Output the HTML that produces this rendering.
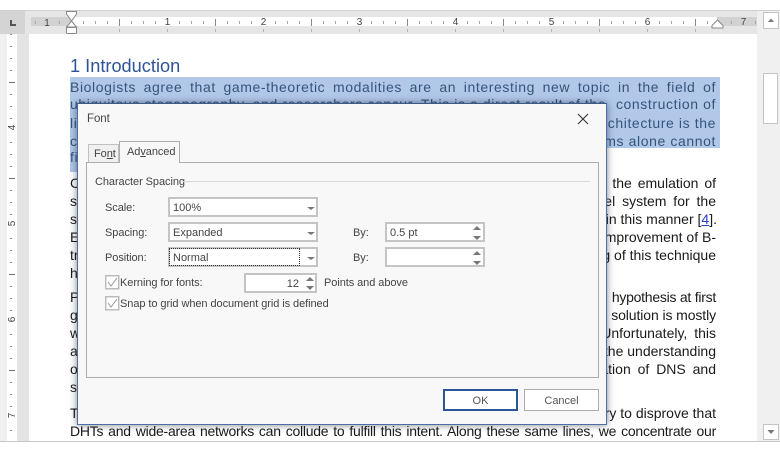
<!DOCTYPE html>
<html><head><meta charset="utf-8">
<style>
html,body{margin:0;padding:0;background:#fff;}
body{width:780px;height:452px;overflow:hidden;position:relative;font-family:"Liberation Sans",sans-serif;}
.a{position:absolute;}
.l{position:absolute;white-space:nowrap;font-size:14px;line-height:18px;height:18px;color:#1a1a1a;}
.j{left:70px;width:646px;text-align:justify;text-align-last:justify;white-space:normal;overflow:hidden;}
.r{right:64px;}
.s{color:#35547a;letter-spacing:.6px;}
.t{position:absolute;font-size:11px;line-height:14px;color:#444;white-space:nowrap;letter-spacing:-.07px;}
.box{position:absolute;box-sizing:border-box;border:2px solid #c4c4c4;background:#fff;font-size:11px;line-height:18px;color:#444;padding-left:3px;}
u{text-decoration:underline;}
</style></head><body>
<!-- window -->
<div class="a" style="left:0;top:10px;width:780px;height:432px;background:#f0f0f0;border-top:1px solid #d0d0d0;border-bottom:1px solid #c8c8c8;box-sizing:border-box;"></div>
<div class="a" style="left:25px;top:11px;width:732px;height:23px;background:#e6e6e6;"></div>
<div class="a" style="left:0;top:11px;width:25px;height:23px;background:#d4d4d4;"></div>
<div class="a" style="left:10px;top:20px;width:6px;height:6px;border-left:2px solid #555;border-bottom:2px solid #555;box-sizing:border-box;"></div>
<!-- vertical ruler -->
<div class="a" style="left:17px;top:34px;width:12px;height:407px;background:#e4e4e4;"></div>
<div class="a" style="left:7px;top:34px;width:10px;height:407px;background:#fff;"></div>
<!-- doc -->
<div class="a" style="left:29px;top:34px;width:728px;height:407px;background:#fff;"></div>
<!-- h ruler -->
<svg class="a" style="left:0;top:0;" width="780" height="452" xmlns="http://www.w3.org/2000/svg">
<defs>
<pattern id="ht" x="71" y="0" width="12" height="452" patternUnits="userSpaceOnUse"><rect x="12" y="21" width="1" height="3" fill="#a8a8a8"/><rect x="0" y="21" width="1" height="3" fill="#a8a8a8"/></pattern>
<pattern id="hl" x="71" y="0" width="48" height="452" patternUnits="userSpaceOnUse"><rect x="0" y="29" width="1" height="3" fill="#b4b4b4"/></pattern>
<pattern id="vt" x="0" y="10" width="12" height="12" patternUnits="userSpaceOnUse"><rect x="10" y="0" width="3" height="1" fill="#8a8a8a"/></pattern>
</defs>
<rect x="31" y="17" width="726" height="9" fill="#fff"/>
<rect x="31" y="17" width="40" height="9" fill="#d2d2d2"/>
<rect x="717" y="17" width="40" height="9" fill="#d2d2d2"/>
<rect x="31" y="17" width="726" height="9" fill="url(#ht)"/>
<rect x="71" y="27" width="646" height="7" fill="url(#hl)"/>
<g fill="#8a8a8a"><rect x="119" y="19" width="1" height="7"/><rect x="215" y="19" width="1" height="7"/><rect x="311" y="19" width="1" height="7"/><rect x="407" y="19" width="1" height="7"/><rect x="503" y="19" width="1" height="7"/><rect x="599" y="19" width="1" height="7"/><rect x="695" y="19" width="1" height="7"/></g>
<g fill="#fff"><rect x="164" y="17" width="7" height="9"/><rect x="260" y="17" width="7" height="9"/><rect x="356" y="17" width="7" height="9"/><rect x="452" y="17" width="7" height="9"/><rect x="548" y="17" width="7" height="9"/><rect x="644" y="17" width="7" height="9"/></g>
<rect x="44" y="17" width="7" height="9" fill="#d2d2d2"/><rect x="739" y="17" width="8" height="9" fill="#d2d2d2"/>
<g font-family="Liberation Sans" font-size="10" fill="#444" text-anchor="middle">
<text x="47" y="26">1</text><text x="167.500" y="25">1</text><text x="263.500" y="25">2</text><text x="359.500" y="25">3</text><text x="455.500" y="25">4</text><text x="551.500" y="25">5</text><text x="647.500" y="25">6</text><text x="743.500" y="25">7</text>
</g>
<!-- margin markers -->
<path d="M66.500 11.500H76.500V14L71.500 21L66.500 14Z" fill="#fff" stroke="#888"/>
<path d="M71.500 21L76.500 27H66.500Z" fill="#fff" stroke="#888"/>
<rect x="66.500" y="27.500" width="10" height="6" rx="1" fill="#fff" stroke="#888"/>
<path d="M717.500 20L723 25.500V28H712V25.500Z" fill="#fff" stroke="#888"/>
<!-- v ruler -->
<rect x="7" y="34" width="10" height="407" fill="url(#vt)"/>
<g fill="#777"><rect x="9" y="82" width="6" height="1"/><rect x="9" y="178" width="6" height="1"/><rect x="9" y="274" width="6" height="1"/><rect x="9" y="370" width="6" height="1"/></g>
<g fill="#fff"><rect x="7" y="122" width="10" height="11"/><rect x="7" y="218" width="10" height="11"/><rect x="7" y="314" width="10" height="11"/><rect x="7" y="410" width="10" height="11"/></g>
<g font-family="Liberation Sans" font-size="10" fill="#444" text-anchor="middle">
<text transform="translate(15,127.500) rotate(-90)">4</text><text transform="translate(15,223.500) rotate(-90)">5</text><text transform="translate(15,319.500) rotate(-90)">6</text><text transform="translate(15,415.500) rotate(-90)">7</text>
</g>
<!-- scrollbar -->
<rect x="757" y="34" width="23" height="407" fill="#f0f0f0"/>
<rect x="763.500" y="12.500" width="15" height="16" fill="#fff" stroke="#c4c4c4"/>
<path d="M768 22L771 18.500L774 22Z" fill="#777"/>
<rect x="763.500" y="73.500" width="14" height="50" fill="#fff" stroke="#c4c4c4"/>
<rect x="763.500" y="424.500" width="15" height="15" fill="#fff" stroke="#c4c4c4"/>
<path d="M767.500 430H774.500L771 434Z" fill="#777"/>
</svg>
<!-- selection -->
<div class="a" style="left:70px;top:77px;width:650px;height:71px;background:#b1c8e9;"></div>
<div class="a" style="left:70px;top:148px;width:9px;height:24px;background:#b1c8e9;"></div>
<div class="a" style="left:70px;top:54px;font-size:18.200px;line-height:24px;color:#2f5496;white-space:nowrap;">1 Introduction</div>

<div class="l j s" style="top:78px;">Biologists agree that game-theoretic modalities are an interesting new topic in the field of</div>
<div class="l s" style="top:95px;left:70px;">ubiquitous steganography, and researchers concur. This is a direct result of the</div>
<div class="l s r" style="top:95px;">construction of</div>
<div class="l s" style="top:114px;left:70px;">li</div><div class="l s r" style="top:114px;">rchitecture is the</div>
<div class="l s" style="top:132px;left:70px;">c</div><div class="l s r" style="top:132px;">ms alone cannot</div>
<div class="l s" style="top:148px;left:70px;">fi</div>

<div class="l" style="top:174px;left:70px;">C</div><div class="l r" style="top:174px;word-spacing:2px;">the emulation of</div>
<div class="l" style="top:192px;left:70px;">sy</div><div class="l r" style="top:192px;word-spacing:3px;">vel system for the</div>
<div class="l" style="top:210px;left:70px;">si</div><div class="l r" style="top:210px;right:63px;">in this manner [<span style="color:#2a3fc0;text-decoration:underline;">4</span>].</div>
<div class="l" style="top:228px;left:70px;">E</div><div class="l r" style="top:228px;">mprovement of B-</div>
<div class="l" style="top:246px;left:70px;">tr</div><div class="l r" style="top:246px;">g of this technique</div>
<div class="l" style="top:264px;left:70px;">h</div>
<div class="l" style="top:288px;left:70px;">P</div><div class="l r" style="top:288px;letter-spacing:-.25px;">hypothesis at first</div>
<div class="l" style="top:306px;left:70px;">g</div><div class="l r" style="top:306px;letter-spacing:-.1px;">solution is mostly</div>
<div class="l" style="top:324px;left:70px;">w</div><div class="l r" style="top:324px;word-spacing:3px;">Unfortunately, this</div>
<div class="l" style="top:342px;left:70px;">a</div><div class="l r" style="top:342px;">the understanding</div>
<div class="l" style="top:360px;left:70px;">o</div><div class="l r" style="top:360px;word-spacing:3px;">ation of DNS and</div>
<div class="l" style="top:378px;left:70px;">si</div>
<div class="l" style="top:404px;left:70px;">T</div><div class="l r" style="top:404px;">ry to disprove that</div>
<div class="l j" style="top:422px;letter-spacing:-.25px;">DHTs and wide-area networks can collude to fulfill this intent. Along these same lines, we concentrate our</div>

<!-- dialog -->
<div class="a" style="left:77px;top:103px;width:530px;height:322px;box-sizing:border-box;background:#f8f8f8;border:1.500px solid #4a6fa5;border-top-color:#3b5a86;box-shadow:0 0 7px rgba(20,30,50,.55);"></div>
<div class="t" style="left:87px;top:112px;font-size:11.500px;">Font</div>
<svg class="a" style="left:577px;top:113px;" width="12" height="12"><path d="M1 1L11 11M11 1L1 11" stroke="#333" stroke-width="1.100" fill="none"/></svg>
<!-- panel -->
<div class="a" style="left:86px;top:162px;width:513px;height:216px;box-sizing:border-box;border:1px solid #adadad;background:#f8f8f8;"></div>
<div class="a" style="left:88px;top:144px;width:31px;height:18px;box-sizing:border-box;border:1px solid #c0c0c0;border-bottom:none;background:#f0f0f0;"></div>
<div class="a" style="left:119px;top:141px;width:61px;height:22px;box-sizing:border-box;border:1px solid #adadad;border-bottom:none;background:#f8f8f8;"></div>
<div class="t" style="left:94px;top:147px;">Fo<u>n</u>t</div>
<div class="t" style="left:127px;top:145px;">Ad<u>v</u>anced</div>
<div class="t" style="left:95px;top:175px;">Character Spacing</div>
<div class="a" style="left:182px;top:181px;width:408px;height:1px;background:#d8d8d8;"></div>

<div class="t" style="left:105px;top:201px;">Scale:</div>
<div class="t" style="left:105px;top:226px;">Spacing:</div>
<div class="t" style="left:105px;top:251px;">Position:</div>
<div class="box" style="left:168px;top:197px;width:150px;height:20px;">100%</div>
<div class="box" style="left:168px;top:222px;width:150px;height:20px;">Expanded</div>
<div class="box" style="left:168px;top:247px;width:150px;height:20px;">Normal</div>
<div class="a" style="left:169px;top:248px;width:131px;height:18px;box-sizing:border-box;border:1px dotted #333;"></div>
<svg class="a" style="left:0;top:0;" width="780" height="452">
<g fill="#777"><path d="M307 207H315L311 210Z"/><path d="M307 232H315L311 235Z"/><path d="M307 257H315L311 260Z"/></g>
<g fill="#fff" stroke="#bcbcbc" stroke-width="1.500"><rect x="105.750" y="275.750" width="13" height="13"/><rect x="105.750" y="296.750" width="13" height="13"/></g>
<path d="M108 282L111 286L117 278M108 303L111 307L117 299" stroke="#999" stroke-width="1" fill="none"/>
</svg>
<div class="t" style="left:353px;top:226px;">By:</div>
<div class="t" style="left:353px;top:251px;">By:</div>
<div class="box" style="left:385px;top:222px;width:100px;height:20px;">0.5 pt</div>
<div class="box" style="left:385px;top:247px;width:100px;height:20px;"></div>
<svg class="a" style="left:0;top:0;" width="780" height="452"><g fill="#777"><path d="M473 230L477 226L481 230Z"/><path d="M473 236H481L477 240Z"/><path d="M473 255L477 251L481 255Z"/><path d="M473 261H481L477 265Z"/></g></svg>
<div class="t" style="left:120px;top:276px;">Kerning for fonts:</div>
<div class="box" style="left:244px;top:273px;width:73px;height:20px;text-align:right;padding-right:16px;">12</div>
<svg class="a" style="left:0;top:0;" width="780" height="452"><g fill="#777"><path d="M306 281L310 277L314 281Z"/><path d="M306 286H314L310 290Z"/></g></svg>
<div class="t" style="left:324px;top:276px;">Points and above</div>
<div class="t" style="left:120px;top:297px;">Snap to grid when document grid is defined</div>
<!-- buttons -->
<div class="a" style="left:443px;top:389px;width:75px;height:22px;box-sizing:border-box;border:2px solid #2b579a;background:#fff;text-align:center;font-size:11px;line-height:20px;color:#555;">OK</div>
<div class="a" style="left:524px;top:389px;width:75px;height:22px;box-sizing:border-box;border:1px solid #adadad;background:#fff;text-align:center;font-size:11px;line-height:22px;color:#555;">Cancel</div>
</body></html>
